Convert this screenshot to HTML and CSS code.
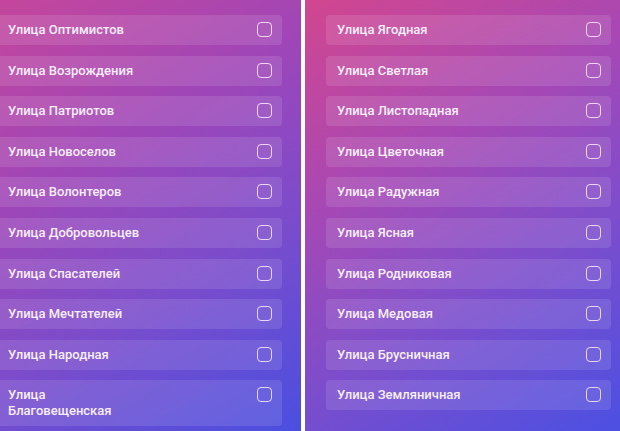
FILE: index.html
```html
<!DOCTYPE html>
<html lang="ru">
<head>
    <meta charset="UTF-8">
    <meta name="viewport" content="width=device-width, initial-scale=1.0">
    <title>Улицы</title>
    <link rel="stylesheet" href="styles.css">
</head>
<body>
    <div class="screens">
        <div class="panel panel-left">
            <ul class="streets">
                <li class="street"><span>Улица Оптимистов</span><i class="check"></i></li>
                <li class="street"><span>Улица Возрождения</span><i class="check"></i></li>
                <li class="street"><span>Улица Патриотов</span><i class="check"></i></li>
                <li class="street"><span>Улица Новоселов</span><i class="check"></i></li>
                <li class="street"><span>Улица Волонтеров</span><i class="check"></i></li>
                <li class="street"><span>Улица Добровольцев</span><i class="check"></i></li>
                <li class="street"><span>Улица Спасателей</span><i class="check"></i></li>
                <li class="street"><span>Улица Мечтателей</span><i class="check"></i></li>
                <li class="street"><span>Улица Народная</span><i class="check"></i></li>
                <li class="street"><span>Улица<br>Благовещенская</span><i class="check"></i></li>
            </ul>
        </div>
        <div class="divider"></div>
        <div class="panel panel-right">
            <ul class="streets">
                <li class="street"><span>Улица Ягодная</span><i class="check"></i></li>
                <li class="street"><span>Улица Светлая</span><i class="check"></i></li>
                <li class="street"><span>Улица Листопадная</span><i class="check"></i></li>
                <li class="street"><span>Улица Цветочная</span><i class="check"></i></li>
                <li class="street"><span>Улица Радужная</span><i class="check"></i></li>
                <li class="street"><span>Улица Ясная</span><i class="check"></i></li>
                <li class="street"><span>Улица Родниковая</span><i class="check"></i></li>
                <li class="street"><span>Улица Медовая</span><i class="check"></i></li>
                <li class="street"><span>Улица Брусничная</span><i class="check"></i></li>
                <li class="street"><span>Улица Земляничная</span><i class="check"></i></li>
            </ul>
        </div>
    </div>
</body>
</html>
```

FILE: styles.css
```css
body {
    margin: 0;
    padding: 0;
    background-color: #fff;
    font-family: Roboto, "Liberation Sans", sans-serif;
    overflow: hidden;
}

.screens {
    display: flex;
    width: 620px;
    height: 431px;
}

.panel {
    height: 431px;
    overflow: hidden;
    box-sizing: border-box;
    padding-top: 15px;
}

.panel-left {
    width: 301px;
    background: linear-gradient(150deg, #c5469c 0%, #9e46b8 35%, #7a4ccc 65%, #4a4fe0 100%);
}

.panel-right {
    width: 315px;
    padding-left: 21px;
    background: linear-gradient(150deg, #d2468f 0%, #a748b4 35%, #7c4dcc 65%, #4c50e2 100%);
}

.divider {
    width: 4px;
    background-color: #fff;
}

.streets {
    list-style: none;
    margin: 0;
    padding: 0;
    display: flex;
    flex-direction: column;
    gap: 10.6px;
    width: 285px;
}

.panel-left .streets {
    margin-left: -3px;
}

.street {
    display: flex;
    justify-content: space-between;
    align-items: flex-start;
    padding: 7px 10px 7px 11px;
    border-radius: 4px;
    background-color: rgba(255, 255, 255, 0.11);
    color: #f8eef8;
    font-size: 13px;
    font-weight: 500;
    line-height: 16px;
}

.check {
    flex: none;
    width: 13px;
    height: 13px;
    border: 1.5px solid rgba(255, 235, 252, 0.85);
    border-radius: 4px;
}
```
